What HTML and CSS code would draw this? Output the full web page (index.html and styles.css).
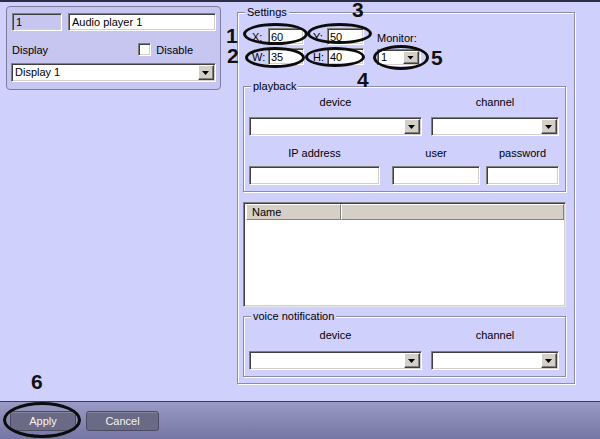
FILE: index.html
```html
<!DOCTYPE html>
<html lang="en">
<head>
    <meta charset="UTF-8">
    <meta name="viewport" content="width=device-width, initial-scale=1.0">
    <title>Audio player 1 - Settings</title>
    <link rel="stylesheet" href="styles.css">
</head>
<body>
    <div class="window">
        <div class="top-line"></div>
        <div class="content">
            <div class="object-panel">
                <div class="name-row">
                    <div class="field field-id">1</div>
                    <div class="field field-name">Audio player 1</div>
                </div>
                <div class="display-row">
                    <span>Display</span>
                    <label class="check-label"><span class="checkbox"></span>Disable</label>
                </div>
                <div class="combo combo-display"><span class="combo-value">Display 1</span><span class="drop"></span></div>
            </div>

            <fieldset class="group settings">
                <legend>Settings</legend>
                <div class="coords">
                    <span class="coord-label">X:</span>
                    <div class="field coord">60</div>
                    <span class="coord-label second">Y:</span>
                    <div class="field coord">50</div>
                    <span class="monitor-label">Monitor:</span>
                    <span class="coord-label">W:</span>
                    <div class="field coord">35</div>
                    <span class="coord-label second">H:</span>
                    <div class="field coord">40</div>
                    <div class="combo combo-monitor"><span class="combo-value">1</span><span class="drop"></span></div>
                </div>

                <fieldset class="group playback">
                    <legend>playback</legend>
                    <div class="pair-row">
                        <div class="col">
                            <div class="cap">device</div>
                            <div class="combo"><span class="combo-value"></span><span class="drop"></span></div>
                        </div>
                        <div class="col">
                            <div class="cap">channel</div>
                            <div class="combo"><span class="combo-value"></span><span class="drop"></span></div>
                        </div>
                    </div>
                    <div class="triple-row">
                        <div class="col col-ip">
                            <div class="cap">IP address</div>
                            <div class="field"></div>
                        </div>
                        <div class="col col-user">
                            <div class="cap">user</div>
                            <div class="field"></div>
                        </div>
                        <div class="col col-pass">
                            <div class="cap">password</div>
                            <div class="field"></div>
                        </div>
                    </div>
                </fieldset>

                <div class="list">
                    <div class="list-head">
                        <span class="head-cell head-name">Name</span>
                        <span class="head-cell head-rest"></span>
                    </div>
                </div>

                <fieldset class="group voice">
                    <legend>voice notification</legend>
                    <div class="pair-row">
                        <div class="col">
                            <div class="cap">device</div>
                            <div class="combo"><span class="combo-value"></span><span class="drop"></span></div>
                        </div>
                        <div class="col">
                            <div class="cap">channel</div>
                            <div class="combo"><span class="combo-value"></span><span class="drop"></span></div>
                        </div>
                    </div>
                </fieldset>
            </fieldset>
        </div>

        <div class="bottom-bar">
            <button class="btn btn-apply">Apply</button>
            <button class="btn btn-cancel">Cancel</button>
        </div>

        <!-- callouts drawn over the form -->
        <span class="ring ring-x"></span>
        <span class="ring ring-y"></span>
        <span class="ring ring-w"></span>
        <span class="ring ring-h"></span>
        <span class="ring ring-monitor"></span>
        <span class="ring ring-apply"></span>
        <span class="mark mark-1">1</span>
        <span class="mark mark-2">2</span>
        <span class="mark mark-3">3</span>
        <span class="mark mark-4">4</span>
        <span class="mark mark-5">5</span>
        <span class="mark mark-6">6</span>
    </div>
</body>
</html>
```

FILE: styles.css
```css
* {
    box-sizing: border-box;
}
body {
    margin: 0;
    background: #d0d0fc;
    font-family: "Liberation Sans", Arial, sans-serif;
    font-size: 11px;
    color: #000;
}
.window {
    position: relative;
    width: 600px;
    height: 439px;
    display: flex;
    flex-direction: column;
    overflow: hidden;
}
.top-line {
    height: 2px;
    background: #2c2c44;
}
.content {
    flex: 1;
    display: flex;
    align-items: flex-start;
}

/* sunken controls */
.field, .combo, .checkbox {
    background: #fff;
    border: 1px solid;
    border-color: #808080 #fff #fff #808080;
    box-shadow: inset 1px 1px 0 #404040, inset -1px -1px 0 #d4d0c8;
}
.field {
    height: 19px;
    padding: 0 3px;
    display: flex;
    align-items: center;
}
.combo {
    display: flex;
    height: 19px;
    padding: 1px;
}
.combo-value {
    flex: 1;
    padding-left: 2px;
    line-height: 15px;
}
.drop {
    position: relative;
    width: 16px;
    background: #d4d0c8;
    border: 1px solid;
    border-color: #fff #404040 #404040 #fff;
    box-shadow: inset -1px -1px 0 #808080;
}
.drop::after {
    content: "";
    position: absolute;
    left: 3px;
    top: 5px;
    width: 7px;
    height: 4px;
    background: #000;
    clip-path: polygon(0 0, 100% 0, 50% 100%);
}

/* left object panel */
.object-panel {
    margin: 4px 0 0 6px;
    width: 215px;
    height: 84px;
    border: 1px solid #7c7ca0;
    border-radius: 4px;
    background: #c6c6f0;
    padding: 6px 4px 0 5px;
}
.name-row {
    display: flex;
    gap: 6px;
}
.field-id {
    width: 50px;
    height: 18px;
    background: #c6c6f0;
}
.field-name {
    width: 148px;
    height: 18px;
}
.display-row {
    display: flex;
    align-items: center;
    justify-content: space-between;
    height: 13px;
    margin-top: 12px;
    padding-right: 23px;
}
.check-label {
    display: flex;
    align-items: center;
}
.checkbox {
    width: 13px;
    height: 13px;
    margin-right: 5px;
}
.combo-display {
    margin: 7px 0 0 -1px;
    width: 205px;
}

/* group boxes */
.group {
    margin: 0;
    min-width: 0;
    border: 1px solid #8c8ca8;
    box-shadow: inset 1px 1px 0 #fff, 1px 1px 0 #fff;
}
.group legend {
    margin-left: 2px;
    padding: 0 2px;
    line-height: 13px;
    background: #d0d0fc;
}
.settings {
    margin: 4px 0 0 16px;
    width: 338px;
    padding: 9px 8px 6px 5px;
}
.coords {
    display: grid;
    grid-template-columns: 16px 36px 23px 37px 57px;
    grid-template-rows: 17px 17px;
    row-gap: 3px;
    align-items: center;
    margin-left: 9px;
}
.coord {
    height: 17px;
    padding-left: 2px;
}
.coord-label.second {
    padding-left: 9px;
}
.monitor-label {
    margin-left: 13px;
    align-self: end;
    line-height: 13px;
}
.combo-monitor {
    margin: 1px 0 0 13px;
    width: 44px;
    height: 17px;
}
.combo-monitor .combo-value {
    line-height: 13px;
}
.combo-monitor .drop::after {
    top: 4px;
}

.playback {
    margin-top: 15px;
    padding: 3px 6px 6px 5px;
}
.voice {
    margin-top: 3px;
    padding: 6px 6px 6px 5px;
}
.pair-row {
    display: grid;
    grid-template-columns: 173px 128px;
    column-gap: 9px;
}
.triple-row {
    display: flex;
    margin-top: 11px;
}
.col-ip {
    width: 131px;
}
.col-user {
    width: 88px;
    margin-left: 12px;
}
.col-pass {
    width: 73px;
    margin-left: 6px;
}
.cap {
    text-align: center;
    line-height: 13px;
    margin-bottom: 8px;
}
.triple-row .cap {
    margin-bottom: 6px;
}
.voice .cap {
    margin-bottom: 9px;
}

/* list view */
.list {
    margin-top: 10px;
    height: 105px;
    background: #fff;
    border: 1px solid;
    border-color: #808080 #e8e8e8 #e8e8e8 #808080;
    box-shadow: inset 1px 1px 0 #404040, inset -1px -1px 0 #d4d0c8;
    padding: 1px 1px 1px 2px;
}
.list-head {
    display: flex;
    height: 16px;
    background: #d4d0c8;
}
.head-cell {
    border: 1px solid;
    border-color: #fff #808080 #808080 #fff;
    line-height: 14px;
    padding-left: 5px;
}
.head-name {
    width: 95px;
}
.head-rest {
    flex: 1;
}

/* bottom bar */
.bottom-bar {
    height: 38px;
    border-top: 1px solid #3a3a52;
    background: linear-gradient(#9a9ac6, #7676a4);
    display: flex;
    align-items: flex-start;
    gap: 10px;
    padding: 9px 0 0 10px;
}
.btn {
    height: 20px;
    border: 1px solid #4a4a60;
    border-radius: 3px;
    background: #6a6a86;
    box-shadow: inset 0 1px 0 rgba(255,255,255,0.18);
    color: #f4f4f4;
    font-family: "Liberation Sans", Arial, sans-serif;
    font-size: 11px;
    padding: 0;
}
.btn-apply {
    width: 66px;
}
.btn-cancel {
    width: 73px;
}

/* callouts */
.ring {
    position: absolute;
    border: 3px solid #0c0c0c;
    border-radius: 50%;
}
.ring-x { left: 243px; top: 23px; width: 65px; height: 22px; }
.ring-y { left: 307px; top: 23px; width: 65px; height: 21px; }
.ring-w { left: 245px; top: 47px; width: 60px; height: 21px; }
.ring-h { left: 305px; top: 47px; width: 60px; height: 20px; }
.ring-monitor { left: 373px; top: 45px; width: 56px; height: 25px; }
.ring-apply { left: 3px; top: 402px; width: 78px; height: 36px; }
.mark {
    position: absolute;
    font-size: 21px;
    font-weight: bold;
    line-height: 16px;
    color: #111;
}
.mark-1 { left: 226px; top: 28px; }
.mark-2 { left: 227px; top: 48px; }
.mark-3 { left: 352px; top: 2px; }
.mark-4 { left: 357px; top: 72px; }
.mark-5 { left: 431px; top: 50px; }
.mark-6 { left: 31px; top: 374px; }
```
